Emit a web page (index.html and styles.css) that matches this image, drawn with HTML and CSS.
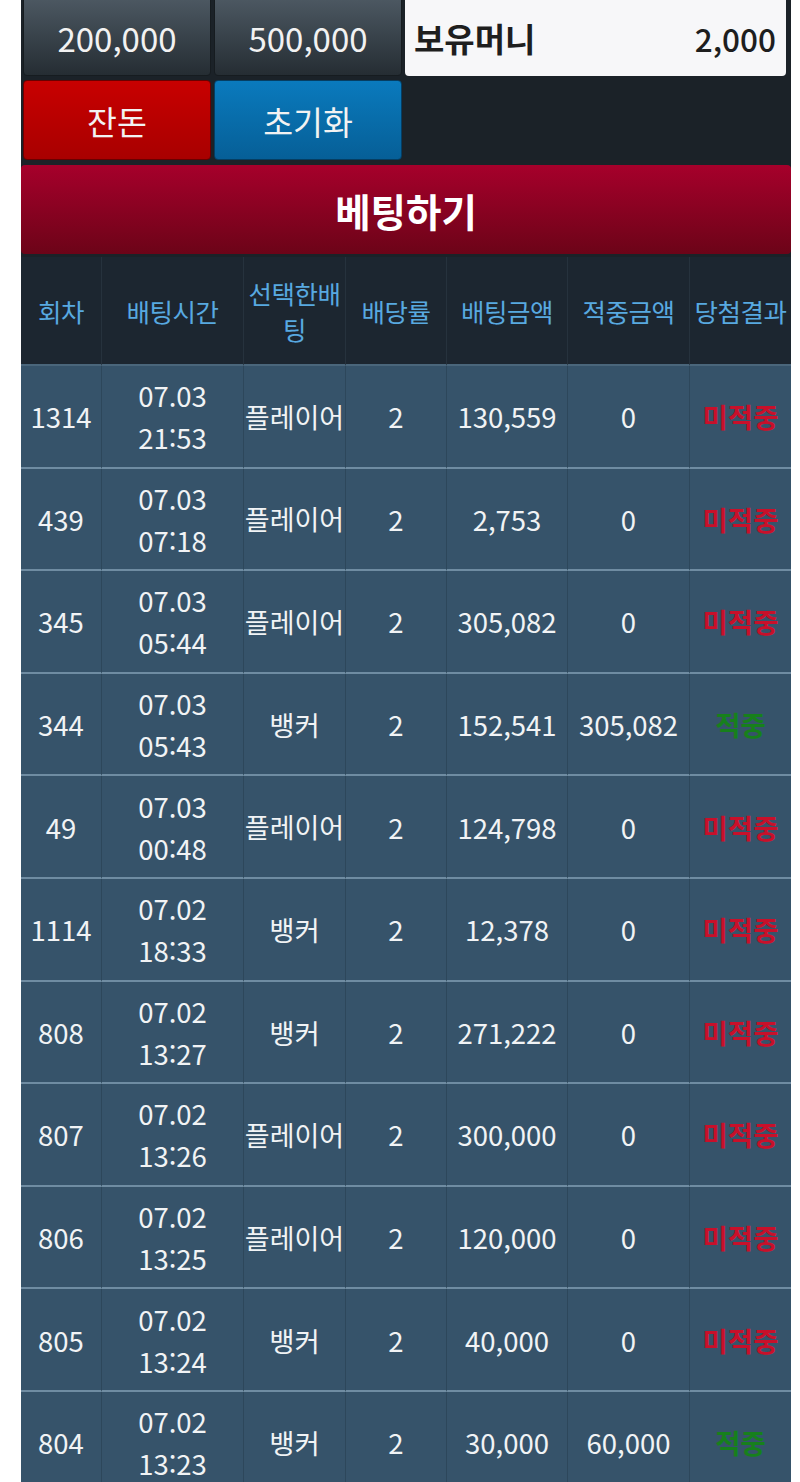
FILE: index.html
```html
<!DOCTYPE html>
<html lang="ko">
<head>
<meta charset="utf-8">
<title>베팅하기</title>
<link rel="stylesheet" href="styles.css">
</head>
<body>
<div class="page">
  <div class="top">
    <div class="btn btn-dark">200,000</div>
    <div class="btn btn-dark">500,000</div>
    <div class="money"><span class="money-label">보유머니</span><span class="money-val">2,000</span></div>
    <div class="btn btn-red">잔돈</div>
    <div class="btn btn-blue">초기화</div>
  </div>
  <div class="banner">베팅하기</div>
  <table class="list">
    <colgroup>
      <col class="c1"><col class="c2"><col class="c3"><col class="c4"><col class="c5"><col class="c6"><col class="c7">
    </colgroup>
    <thead>
      <tr><th>회차</th><th>배팅시간</th><th>선택한배<br>팅</th><th>배당률</th><th>배팅금액</th><th>적중금액</th><th>당첨결과</th></tr>
    </thead>
    <tbody>
      <tr><td>1314</td><td>07.03<br>21:53</td><td><span class="fit">플레이어</span></td><td>2</td><td>130,559</td><td>0</td><td class="lose">미적중</td></tr>
      <tr><td>439</td><td>07.03<br>07:18</td><td><span class="fit">플레이어</span></td><td>2</td><td>2,753</td><td>0</td><td class="lose">미적중</td></tr>
      <tr><td>345</td><td>07.03<br>05:44</td><td><span class="fit">플레이어</span></td><td>2</td><td>305,082</td><td>0</td><td class="lose">미적중</td></tr>
      <tr><td>344</td><td>07.03<br>05:43</td><td>뱅커</td><td>2</td><td>152,541</td><td>305,082</td><td class="win">적중</td></tr>
      <tr><td>49</td><td>07.03<br>00:48</td><td><span class="fit">플레이어</span></td><td>2</td><td>124,798</td><td>0</td><td class="lose">미적중</td></tr>
      <tr><td>1114</td><td>07.02<br>18:33</td><td>뱅커</td><td>2</td><td>12,378</td><td>0</td><td class="lose">미적중</td></tr>
      <tr><td>808</td><td>07.02<br>13:27</td><td>뱅커</td><td>2</td><td>271,222</td><td>0</td><td class="lose">미적중</td></tr>
      <tr><td>807</td><td>07.02<br>13:26</td><td><span class="fit">플레이어</span></td><td>2</td><td>300,000</td><td>0</td><td class="lose">미적중</td></tr>
      <tr><td>806</td><td>07.02<br>13:25</td><td><span class="fit">플레이어</span></td><td>2</td><td>120,000</td><td>0</td><td class="lose">미적중</td></tr>
      <tr><td>805</td><td>07.02<br>13:24</td><td>뱅커</td><td>2</td><td>40,000</td><td>0</td><td class="lose">미적중</td></tr>
      <tr><td>804</td><td>07.02<br>13:23</td><td>뱅커</td><td>2</td><td>30,000</td><td>60,000</td><td class="win">적중</td></tr>
    </tbody>
  </table>
</div>
</body>
</html>
```
FILE: styles.css
```css
html, body {
  margin: 0;
  padding: 0;
  background: #ffffff;
}
body {
  font-family: "Noto Sans CJK KR", "Noto Sans", sans-serif;
}
.page {
  margin-left: 21px;
  width: 770px;
  background: #1b2228;
  overflow: hidden;
}
.top {
  display: grid;
  grid-template-columns: 188px 188px 1fr;
  grid-template-rows: 80px 80px;
  column-gap: 3px;
  row-gap: 4px;
  padding: 0 5px 0 2px;
  margin-top: -4px;
}
.btn {
  display: flex;
  align-items: center;
  justify-content: center;
  border-radius: 4px;
  color: #f2f2f2;
  font-size: 32.5px;
  box-sizing: border-box;
}
.btn-dark {
  font-size: 33px;
  background: linear-gradient(#4d5963, #252d33);
  border: 1px solid #161c20;
  padding-top: 4px;
}
.btn-red {
  background: linear-gradient(#c80000, #a80000);
  border: 1px solid #6a0000;
}
.btn-blue {
  background: linear-gradient(#0a7abd, #065f97);
  border: 1px solid #053e63;
}
.money {
  grid-row: 1;
  grid-column: 3;
  display: flex;
  align-items: center;
  justify-content: space-between;
  background: #f7f7f9;
  border-radius: 4px;
  padding: 4px 10px 0 9px;
  color: #1e1e1e;
}
.money-label {
  font-weight: 700;
  font-size: 33px;
}
.money-val {
  font-weight: 500;
  font-size: 31.5px;
}
.banner {
  margin-top: 5px;
  height: 89px;
  border-radius: 4px;
  background: linear-gradient(#a6002b, #6c0418);
  color: #ffffff;
  font-size: 38.5px;
  font-weight: 700;
  display: flex;
  align-items: center;
  justify-content: center;
  margin-bottom: 3px;
}
.list {
  width: 770px;
  table-layout: fixed;
  border-collapse: separate;
  border-spacing: 0;
}
.c1 { width: 80px; }
.c2 { width: 142px; }
.c3 { width: 102px; }
.c4 { width: 101px; }
.c5 { width: 121px; }
.c6 { width: 122px; }
.c7 { width: 102px; }
.list th {
  height: 107px;
  padding: 0;
  background: #1c2630;
  color: #58a9e0;
  font-size: 25.5px;
  letter-spacing: -0.4px;
  font-weight: 400;
  line-height: 36px;
  border-bottom: 2px solid #4a667b;
  border-left: 1px solid #26323d;
  text-align: center;
  vertical-align: middle;
  white-space: nowrap;
}
.list td {
  padding: 8.3px 0;
  background: #36536a;
  color: #f1f3f5;
  font-size: 27.5px;
  line-height: 42px;
  border-bottom: 2px solid #6f8ca2;
  border-left: 1px solid #2d475b;
  text-align: center;
  vertical-align: middle;
  white-space: nowrap;
}
.list th:first-child,
.list td:first-child {
  border-left: none;
}
.fit {
  display: inline-block;
  margin: 0 -6px;
  font-size: 27px;
}
.list td.lose {
  color: #c8102a;
  font-weight: 700;
  font-size: 27.5px;
}
.list td.win {
  color: #17801c;
  font-weight: 700;
  font-size: 27.5px;
}
```
